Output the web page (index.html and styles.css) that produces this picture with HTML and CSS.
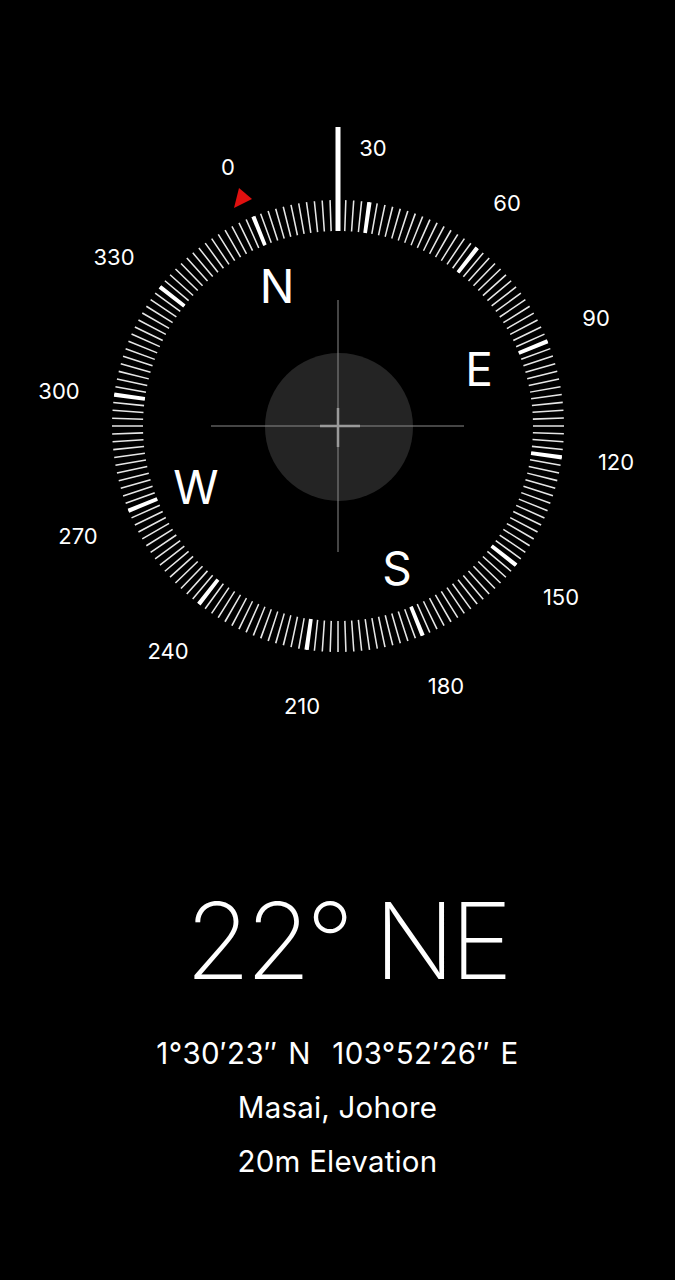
FILE: index.html
```html
<!DOCTYPE html>
<html lang="en">
<head>
    <meta charset="UTF-8">
    <meta name="viewport" content="width=device-width, initial-scale=1.0">
    <title>Compass</title>
    <link rel="stylesheet" href="styles.css">
</head>
<body>
    <div class="screen">
        <svg class="dial" width="675" height="760" viewBox="0 0 675 760">
            <!-- level bubble + crosshair -->
            <circle class="bubble" cx="339" cy="427" r="74"/>
            <line class="cross" x1="338" y1="300" x2="338" y2="552"/>
            <line class="cross" x1="211" y1="426" x2="464" y2="426"/>
            <line class="cross-small" x1="320" y1="426" x2="360" y2="426"/>
            <line class="cross-small" x1="338" y1="408" x2="338" y2="447"/>

            <!-- rotating ring, heading 22 -->
            <g transform="rotate(-22 338 426)">
                <circle class="ticks" cx="338" cy="426" r="210.5" pathLength="360"/>
                <circle class="ticks-major" cx="338" cy="426" r="210.5" pathLength="360"/>
            </g>

            <polygon class="north-mark" points="239,188 234,208 252,199"/>
            <rect class="needle" x="335.5" y="127" width="5" height="104"/>

            <g class="degrees">
                <text x="228" y="175">0</text>
                <text x="373" y="156">30</text>
                <text x="507" y="211">60</text>
                <text x="596" y="326">90</text>
                <text x="616" y="470">120</text>
                <text x="561" y="605">150</text>
                <text x="446" y="694">180</text>
                <text x="302" y="714">210</text>
                <text x="168" y="659">240</text>
                <text x="78" y="544">270</text>
                <text x="59" y="399">300</text>
                <text x="114" y="265">330</text>
            </g>
            <g class="cardinals">
                <text x="277" y="303">N</text>
                <text x="479" y="386">E</text>
                <text x="397" y="585">S</text>
                <text x="196" y="504">W</text>
            </g>
        </svg>

        <div class="info">
            <div class="heading">22° NE</div>
            <div class="line coords">1°30′23″ N&nbsp;&nbsp;103°52′26″ E</div>
            <div class="line">Masai, Johore</div>
            <div class="line">20m Elevation</div>
        </div>
    </div>
</body>
</html>
```

FILE: styles.css
```css
body {
    margin: 0;
    padding: 0;
    background-color: #000;
    color: #fff;
    font-family: Inter, "Noto Sans", sans-serif;
}
.screen {
    width: 675px;
    height: 1280px;
    overflow: hidden;
}
.dial {
    display: block;
}
.bubble {
    fill: #242424;
}
.cross {
    stroke: #8a8a8a;
    stroke-width: 1;
}
.cross-small {
    stroke: #9a9a9a;
    stroke-width: 2.5;
}
.ticks {
    fill: none;
    stroke: #e6e6e6;
    stroke-width: 31;
    stroke-dasharray: 0.42 1.58;
    stroke-dashoffset: 0.21;
}
.ticks-major {
    fill: none;
    stroke: #fff;
    stroke-width: 31;
    stroke-dasharray: 1.1 28.9;
    stroke-dashoffset: 0.55;
}
.north-mark {
    fill: #e0100f;
}
.needle {
    fill: #fff;
}
.degrees text {
    fill: #fff;
    font-size: 22px;
    text-anchor: middle;
}
.cardinals text {
    fill: #fff;
    font-size: 46px;
    text-anchor: middle;
}
.info {
    margin-top: 127px;
    text-align: center;
}
.heading {
    font-size: 106px;
    font-weight: 200;
    line-height: 108px;
    letter-spacing: -5px;
    margin-bottom: 31px;
    padding-left: 18px;
}
.line {
    font-size: 29.5px;
    line-height: 54px;
    letter-spacing: 0.2px;
}
.coords {
    letter-spacing: 0.4px;
    word-spacing: 2px;
}
```
